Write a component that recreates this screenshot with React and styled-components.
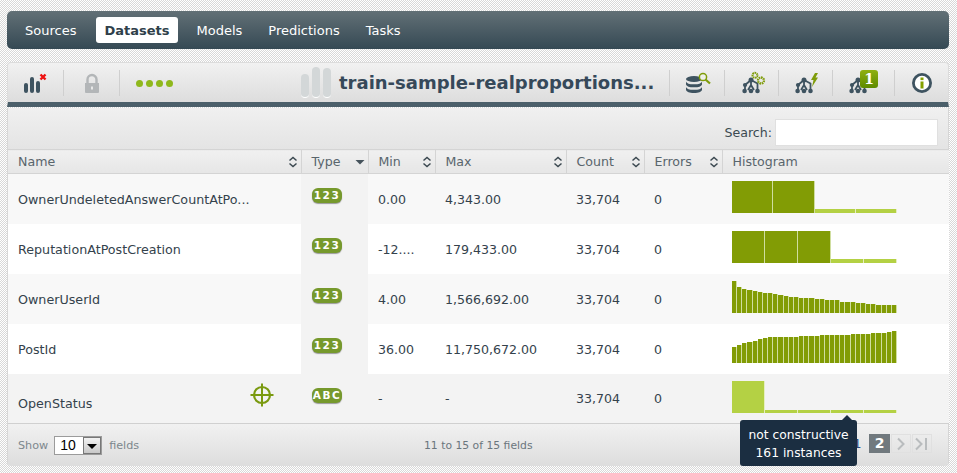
import React from 'react';
import styled, { createGlobalStyle } from 'styled-components';

const GlobalStyle = createGlobalStyle`
    html, body {
        margin: 0;
        padding: 0;
        height: 100%;
    }
    body {
        font-family: "DejaVu Sans", Verdana, sans-serif;
        background: repeating-conic-gradient(#d8d8d8 0 25%, #fff 0 50%) 0 0 / 2px 2px;
    }
`;

const NAV_ITEMS = ['Sources', 'Datasets', 'Models', 'Predictions', 'Tasks'];
const HIST_WIDTH = 165;

const COLUMNS = [
    { label: 'Name', width: 293, sort: 'both' },
    { label: 'Type', width: 67, sort: 'down' },
    { label: 'Min', width: 67, sort: 'both' },
    { label: 'Max', width: 131, sort: 'both' },
    { label: 'Count', width: 78, sort: 'both' },
    { label: 'Errors', width: 78, sort: 'both' },
    { label: 'Histogram', width: 227 },
];

const ROWS = [
    {
        name: 'OwnerUndeletedAnswerCountAtPo...', type: '123', min: '0.00', max: '4,343.00',
        bars: [32, 32, 4, 4],
    },
    {
        name: 'ReputationAtPostCreation', type: '123', min: '-12....', max: '179,433.00',
        bars: [32, 32, 32, 4, 4],
    },
    {
        name: 'OwnerUserId', type: '123', min: '4.00', max: '1,566,692.00',
        bars: [32, 26, 24, 23, 22, 21, 20, 20, 19, 18, 17, 16, 16, 15, 15, 15, 14, 14, 13, 13, 13, 11, 11, 11, 10, 10, 9, 9, 8, 8, 8, 8],
    },
    {
        name: 'PostId', type: '123', min: '36.00', max: '11,750,672.00',
        bars: [16, 18, 20, 21, 22, 24, 25, 26, 26, 26, 26, 26, 26, 27, 27, 27, 27, 28, 28, 28, 28, 28, 28, 29, 29, 29, 29, 30, 30, 30, 31, 32],
    },
    {
        name: 'OpenStatus', type: 'ABC', min: '-', max: '-', objective: true,
        bars: [32, 3, 3, 3, 3],
    },
];

const SortIcon = ({ kind }) => (
    <SortSvg viewBox="0 0 10 12">
        {kind === 'down' ? (
            <path d="M0.5 4h9L5 8.5z" fill="#46535c" />
        ) : (
            <path d="M1.5 4.5L5 1.5l3.5 3M1.5 7.5L5 10.5l3.5-3" fill="none" stroke="#3b4850" strokeWidth="1.5" />
        )}
    </SortSvg>
);

const BarsIcon = () => (
    <svg width="24" height="24" viewBox="0 0 24 24">
        <rect x="0" y="12" width="4" height="10" rx="2" fill="#3e5360" />
        <rect x="6" y="6" width="4" height="16" rx="2" fill="#3e5360" />
        <rect x="12" y="10" width="4" height="12" rx="2" fill="#3e5360" />
        <path d="M16.5 3.5l5 5M21.5 3.5l-5 5" stroke="#ee1111" strokeWidth="2.4" />
    </svg>
);

const LockIcon = () => (
    <svg width="16" height="20" viewBox="0 0 16 20">
        <path d="M3.5 10V6.5a4.5 4.5 0 0 1 9 0V10" fill="none" stroke="#b3b6b8" strokeWidth="2.4" />
        <path d="M1 10h14v9a1 1 0 0 1-1 1H2a1 1 0 0 1-1-1z" fill="#b3b6b8" />
        <rect x="7" y="13.5" width="2" height="3" fill="#e8e8e8" />
    </svg>
);

const DatabaseIcon = () => (
    <svg width="26" height="24" viewBox="0 0 26 24">
        <ellipse cx="8" cy="8" rx="8" ry="3" fill="#3e5360" />
        <path d="M0 10.5c1 2 3 2.8 8 2.8s7-.8 8-2.8v3c-1 2-3 2.8-8 2.8s-7-.8-8-2.8z" fill="#3e5360" />
        <path d="M0 16c1 2 3 2.8 8 2.8s7-.8 8-2.8v3c-1 2-3 3-8 3s-7-1-8-3z" fill="#3e5360" />
        <circle cx="17" cy="6" r="3.6" fill="#eef0ea" stroke="#7f9c0a" strokeWidth="1.5" />
        <path d="M19.5 8.5l4.5 4" stroke="#7f9c0a" strokeWidth="2.2" />
    </svg>
);

const Tree = () => (
    <g transform="translate(0 6)" fill="#3e5360" stroke="#3e5360">
        <path d="M9 3L3 8v6M9 3l6.5 3.5v7.5M9 3v5l-3 5M9 8l3 5" fill="none" strokeWidth="1.8" />
        <circle cx="9" cy="3" r="2.5" strokeWidth="0" />
        <circle cx="3" cy="8" r="2.1" strokeWidth="0" />
        <circle cx="2.6" cy="14" r="2.3" strokeWidth="0" />
        <circle cx="9" cy="14" r="2.3" strokeWidth="0" />
        <circle cx="15.5" cy="14" r="2.3" strokeWidth="0" />
    </g>
);

const GearsTreeIcon = () => (
    <svg width="24" height="24" viewBox="0 0 24 24">
        <Tree />
        <g fill="none" stroke="#7f9c0a">
            <circle cx="13" cy="4.3" r="2.5" strokeWidth="2" strokeDasharray="1.6 0.6" />
            <circle cx="19" cy="9.5" r="3" strokeWidth="2.3" strokeDasharray="1.6 0.7" />
        </g>
    </svg>
);

const BoltTreeIcon = () => (
    <svg width="24" height="24" viewBox="0 0 24 24">
        <Tree />
        <path d="M20 2h3l-2.5 4.5h2.5L17 16l1.5-7H16z" fill="#7f9c0a" />
    </svg>
);

const InfoIcon = () => (
    <svg width="20" height="20" viewBox="0 0 20 20">
        <circle cx="10" cy="10" r="8.6" fill="#fff" stroke="#3e5360" strokeWidth="2.8" />
        <rect x="8.5" y="8.5" width="3" height="7" fill="#84a000" />
        <rect x="8.5" y="4.5" width="3" height="2.6" fill="#84a000" />
    </svg>
);

const TargetIcon = () => (
    <svg width="24" height="24" viewBox="0 0 24 24">
        <circle cx="12" cy="12" r="8" fill="none" stroke="#7a9a10" strokeWidth="2.2" />
        <path d="M12 0.5v23M0.5 12h23" stroke="#7a9a10" strokeWidth="2" />
    </svg>
);

const PagerGlyph = ({ last }) => (
    <svg width="18" height="14" viewBox="0 0 18 14">
        <path d={last ? 'M3 1.5l5.5 5.5L3 12.5' : 'M6 1.5l5.5 5.5L6 12.5'} fill="none" stroke="#b9bcbe" strokeWidth="2" />
        {last && <path d="M13 1v12" stroke="#b9bcbe" strokeWidth="2" />}
    </svg>
);

const Histogram = ({ bars }) => {
    const small = Math.min(...bars) <= 4;
    const oneTall = bars[1] <= 4;
    const edge = i => Math.round(i * HIST_WIDTH / bars.length);
    return (
        <HistogramBox>
            {bars.map((h, i) => (
                <Bar
                    key={i}
                    $light={(small && h <= 4) || oneTall}
                    style={{ height: h, width: edge(i + 1) - edge(i) }}
                />
            ))}
        </HistogramBox>
    );
};

const App = () => {
    return (
        <Page>
            <GlobalStyle />

            <Nav>
                {NAV_ITEMS.map(item => (
                    <NavItem key={item} $active={item === 'Datasets'}>{item}</NavItem>
                ))}
            </Nav>

            <Toolbar>
                <ToolLeft>
                    <ToolCell $w={56} $pad={16}><BarsIcon /></ToolCell>
                    <ToolCell $w={56}><LockIcon /></ToolCell>
                    <Dots><Dot /><Dot /><Dot /><Dot /></Dots>
                </ToolLeft>
                <TitleBlock>
                    <Pills>
                        <Pill $h={23} />
                        <Pill $h={30} />
                        <Pill $h={29} />
                    </Pills>
                    <Title>train-sample-realproportions...</Title>
                </TitleBlock>
                <ToolRight>
                    <ToolCell $w={55} $line $pad={16}><DatabaseIcon /></ToolCell>
                    <ToolCell $w={54} $line $pad={17}><GearsTreeIcon /></ToolCell>
                    <ToolCell $w={54} $line $pad={16}><BoltTreeIcon /></ToolCell>
                    <ToolCell $w={62} $line $pad={16}>
                        <BadgeWrap>
                            <svg width="24" height="24" viewBox="0 0 24 24"><Tree /></svg>
                            <CountBadge>1</CountBadge>
                        </BadgeWrap>
                    </ToolCell>
                    <ToolCell $w={54} $line $pad={17}><InfoIcon /></ToolCell>
                </ToolRight>
            </Toolbar>

            <Panel>
                <SearchBar>
                    <SearchLabel>Search:</SearchLabel>
                    <SearchInput />
                </SearchBar>

                <Table>
                    <colgroup>
                        {COLUMNS.map(c => <col key={c.label} width={c.width} />)}
                    </colgroup>
                    <thead>
                        <tr>
                            {COLUMNS.map(c => (
                                <Th key={c.label}>
                                    <ThInner>
                                        {c.label}
                                        {c.sort && <SortIcon kind={c.sort} />}
                                    </ThInner>
                                </Th>
                            ))}
                        </tr>
                    </thead>
                    <tbody>
                        {ROWS.map((row, i) => (
                            <Row key={row.name} $odd={i % 2 === 0} $last={i === ROWS.length - 1}>
                                <NameCell $low={row.objective}>
                                    {row.name}
                                    {row.objective && <Target><TargetIcon /></Target>}
                                </NameCell>
                                <TypeCell><TypeBadge>{row.type}</TypeBadge></TypeCell>
                                <Td>{row.min}</Td>
                                <Td>{row.max}</Td>
                                <Td>33,704</Td>
                                <Td>0</Td>
                                <HistCell><Histogram bars={row.bars} /></HistCell>
                            </Row>
                        ))}
                    </tbody>
                </Table>

                <Footer>
                    <Length>
                        Show
                        <SelectBox>
                            <SelectValue>10</SelectValue>
                            <SelectArrow />
                        </SelectBox>
                        fields
                    </Length>
                    <Info>11 to 15 of 15 fields</Info>
                    <Pager>
                        <PageLink>1</PageLink>
                        <PageActive>2</PageActive>
                        <PageGlyphBox><PagerGlyph /></PageGlyphBox>
                        <PageGlyphBox><PagerGlyph last /></PageGlyphBox>
                    </Pager>
                    <Tooltip>
                        not constructive<br />161 instances
                    </Tooltip>
                </Footer>
            </Panel>
        </Page>
    );
};

const Page = styled.div`
    width: 942px;
    padding: 11px 0 0 7px;
`;

const Nav = styled.div`
    display: flex;
    align-items: center;
    height: 38px;
    padding-left: 5px;
    box-sizing: border-box;
    border-radius: 5px;
    background: linear-gradient(#627076, #354954);
`;

const NavItem = styled.div`
    height: 26px;
    line-height: 27px;
    padding: 0 ${props => props.$active ? '8px' : '13px'};
    margin: 0 ${props => props.$active ? '6px 0 7px' : '0'};
    border-radius: 3px;
    font-size: 13px;
    font-weight: ${props => props.$active ? 'bold' : 'normal'};
    color: ${props => props.$active ? '#2f3f4a' : '#fff'};
    background: ${props => props.$active ? '#fff' : 'transparent'};
`;

const Toolbar = styled.div`
    display: flex;
    align-items: center;
    justify-content: space-between;
    height: 39px;
    margin-top: 13px;
    border: 1px solid #dcdcdc;
    border-bottom: 5px solid #4b5f6a;
    border-radius: 4px 4px 0 0;
    background: linear-gradient(#f1f1f1, #dddddd);
    position: relative;
`;

const ToolLeft = styled.div`
    display: flex;
    align-items: center;
`;

const ToolRight = styled.div`
    display: flex;
    align-items: center;
`;

const ToolCell = styled.div`
    display: flex;
    align-items: center;
    justify-content: ${props => props.$pad ? 'flex-start' : 'center'};
    padding-left: ${props => props.$pad || 0}px;
    width: ${props => props.$w}px;
    height: 26px;
    border-right: ${props => props.$line ? 'none' : '1px solid #cfcfcf'};
    border-left: ${props => props.$line ? '1px solid #cfcfcf' : 'none'};
    box-sizing: border-box;
`;

const Dots = styled.div`
    display: flex;
    gap: 3px;
    margin: 2px 0 0 16px;
`;

const Dot = styled.span`
    width: 7px;
    height: 7px;
    border-radius: 50%;
    background: #8fb81c;
`;

const TitleBlock = styled.div`
    display: flex;
    align-items: center;
    gap: 8px;
    position: absolute;
    left: 293px;
    top: 5px;
`;

const Pills = styled.div`
    display: flex;
    align-items: flex-end;
    gap: 3px;
    height: 30px;
`;

const Pill = styled.span`
    width: 8px;
    height: ${props => props.$h}px;
    border-radius: 4px;
    background: #d3d7d8;
    border-bottom: 1px solid #fff;
`;

const Title = styled.div`
    margin-top: -2px;
    font-size: 18px;
    font-weight: bold;
    color: #36495a;
    white-space: nowrap;
`;

const BadgeWrap = styled.div`
    position: relative;
    width: 36px;
    height: 24px;
`;

const CountBadge = styled.span`
    position: absolute;
    left: 11px;
    top: -1px;
    width: 18px;
    height: 18px;
    border-radius: 3px;
    background: linear-gradient(#8fb010, #5d8a00);
    color: #fff;
    font-family: "DejaVu Serif", serif;
    font-size: 14px;
    font-weight: bold;
    line-height: 18px;
    text-align: center;
`;

const Panel = styled.div`
    border-left: 1px solid #d6d6d6;
    border-right: 1px solid #d6d6d6;
    border-radius: 0 0 4px 4px;
    margin-top: 1px;
`;

const SearchBar = styled.div`
    display: flex;
    align-items: flex-end;
    justify-content: flex-end;
    height: 41px;
    box-sizing: border-box;
    padding: 0 10px 3px 0;
    gap: 3px;
    background: linear-gradient(#f0f0f0, #e4e4e4);
`;

const SearchLabel = styled.span`
    margin-bottom: 6px;
    font-size: 12.6px;
    color: #3c4a52;
`;

const SearchInput = styled.div`
    width: 163px;
    height: 27px;
    box-sizing: border-box;
    border: 1px solid #e0e0e0;
    background: #fff;
`;

const Table = styled.table`
    width: 940px;
    border-collapse: collapse;
    table-layout: fixed;
    font-size: 12.6px;
`;

const Th = styled.th`
    height: 24px;
    padding: 0 3px 0 10px;
    box-sizing: border-box;
    text-align: left;
    font-weight: normal;
    color: #59656c;
    border: 1px solid #d4d4d4;
    border-left-color: #dcdcdc;
    background: linear-gradient(#f0f0f0, #e6e6e6);
    &:first-child {
        border-left: none;
    }
    &:last-child {
        border-right: none;
    }
`;

const ThInner = styled.div`
    display: flex;
    align-items: center;
    justify-content: space-between;
`;

const SortSvg = styled.svg`
    width: 10px;
    height: 12px;
    flex: none;
`;

const Row = styled.tr`
    height: 50px;
    background: ${props => props.$last ? '#f3f3f3' : props.$odd ? '#f8f8f8' : '#fff'};
    border-bottom: ${props => props.$last ? '1px solid #d0d0d0' : 'none'};
`;

const Td = styled.td`
    padding: 1px 0 0 10px;
    color: #34424c;
    white-space: nowrap;
`;

const NameCell = styled(Td)`
    position: relative;
    font-size: 12.7px;
    padding-top: ${props => props.$low ? '10px' : '1px'};
`;

const Target = styled.span`
    position: absolute;
    left: 242px;
    top: 9px;
    line-height: 0;
`;

const TypeCell = styled(Td)`
    background: #f3f3f3;
    vertical-align: top;
    padding: 14px 0 0 11px;
`;

const TypeBadge = styled.span`
    display: block;
    width: 30px;
    height: 15px;
    border-radius: 6px;
    background: #76992c;
    box-shadow: 0 1px 1px #9a9a9a;
    color: #fff;
    font-size: 10.5px;
    font-weight: bold;
    letter-spacing: 1.6px;
    line-height: 15px;
    text-align: center;
`;

const HistCell = styled(Td)`
    vertical-align: top;
    padding-top: 7px;
`;

const HistogramBox = styled.div`
    display: flex;
    align-items: flex-end;
    width: 165px;
    height: 32px;
`;

const Bar = styled.div`
    flex: none;
    box-sizing: border-box;
    background: ${props => props.$light ? '#b4d144' : '#829c05'};
    border-right: 1px solid ${props => props.$light ? '#e6efc0' : '#d0dea0'};
`;

const Footer = styled.div`
    position: relative;
    display: flex;
    align-items: center;
    height: 42px;
    padding: 0 0 0 10px;
    border-radius: 0 0 4px 4px;
    background: linear-gradient(#f1f1f1, #dddddd);
    color: #7d878d;
`;

const Length = styled.div`
    display: flex;
    align-items: center;
    gap: 7px;
    font-size: 11.2px;
`;

const SelectBox = styled.div`
    display: flex;
    width: 48px;
    height: 19px;
    margin-left: -1px;
    box-sizing: border-box;
    border: 1px solid #9b9b9b;
    background: #fff;
`;

const SelectValue = styled.span`
    flex: 1;
    padding-left: 5px;
    font-family: "Liberation Sans", Arial, sans-serif;
    font-size: 14px;
    line-height: 17px;
    color: #000;
`;

const SelectArrow = styled.span`
    position: relative;
    width: 16px;
    border: 1px solid #777;
    background: linear-gradient(#f2f2f2, #c8c8c8);
    &::after {
        content: '';
        position: absolute;
        left: 3px;
        top: 6px;
        border: 5px solid transparent;
        border-top: 5px solid #000;
    }
`;

const Info = styled.div`
    position: absolute;
    left: 416px;
    font-size: 10.8px;
    color: #6b767d;
`;

const Pager = styled.div`
    position: absolute;
    right: 16px;
    top: 10px;
    display: flex;
    align-items: center;
    gap: 1px;
`;

const PageLink = styled.span`
    width: 21px;
    text-align: center;
    font-size: 13px;
    color: #2a4a80;
`;

const PageActive = styled.span`
    width: 21px;
    height: 19px;
    line-height: 19px;
    text-align: center;
    background: #71797e;
    color: #fff;
    font-size: 14px;
    font-weight: bold;
`;

const PageGlyphBox = styled.span`
    display: flex;
    align-items: center;
    justify-content: center;
    width: 20px;
    height: 19px;
    border: 1px solid #e0e0e0;
    box-sizing: border-box;
`;

const Tooltip = styled.div`
    position: absolute;
    left: 732px;
    top: -4px;
    width: 117px;
    height: 46px;
    box-sizing: border-box;
    padding-top: 6px;
    border-radius: 3px;
    background: #1b2e41;
    color: #fff;
    font-size: 12.3px;
    line-height: 18px;
    text-align: center;
    &::before {
        content: '';
        position: absolute;
        right: 5px;
        top: -5px;
        border: 5px solid transparent;
        border-top: 0;
        border-bottom: 5px solid #1b2e41;
    }
`;

export default App;
